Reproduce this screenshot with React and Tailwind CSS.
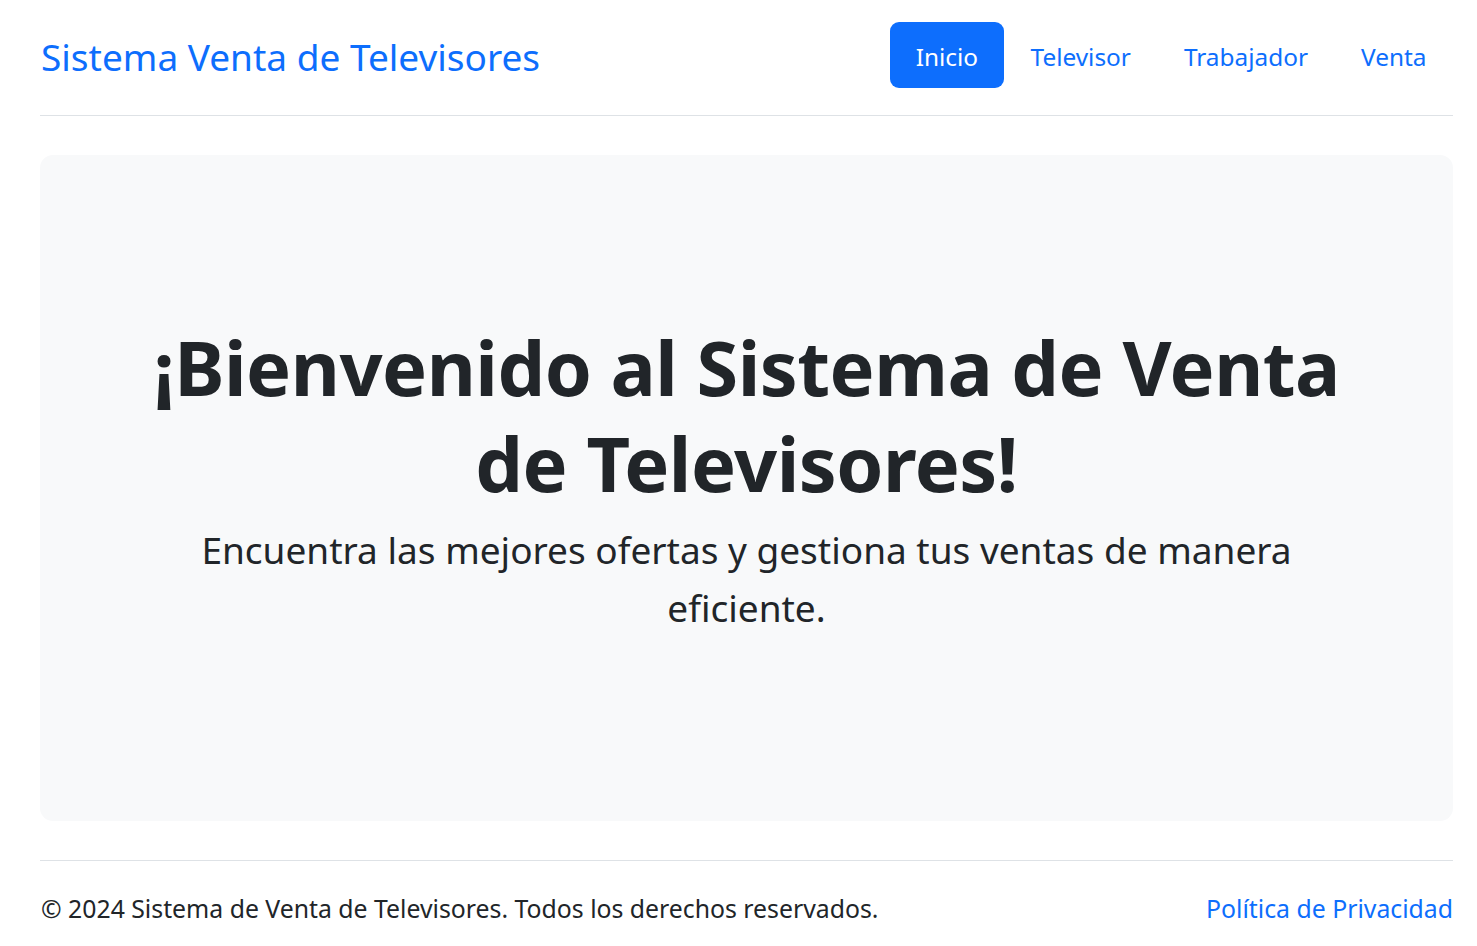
import React from 'react';

const links = ['Televisor', 'Trabajador', 'Venta'];

export default function App() {
  return (
    <div className="min-h-screen bg-white pl-[40px] pr-[24px] text-[#212529] font-['Noto_Sans',sans-serif]">
      {/* header */}
      <header className="flex items-center justify-between pt-[22px] pb-[27px] border-b border-[#dee2e6]">
        <a href="#" className="text-[37px] leading-[48px] text-[#0d6efd] pl-[1px] pt-[4px]">
          Sistema Venta de Televisores
        </a>
        <nav className="flex items-center">
          <a href="#" className="h-[66px] flex items-center pt-[4px] px-[26px] rounded-[9px] bg-[#0d6efd] text-white text-[24.4px]">
            Inicio
          </a>
          {links.map((l) => (
            <a key={l} href="#" className="h-[66px] flex items-center pt-[4px] px-[26.5px] text-[#0d6efd] text-[24.4px]">
              {l}
            </a>
          ))}
        </nav>
      </header>

      {/* hero */}
      <main className="mt-[39px] h-[666px] rounded-[13px] bg-[#f8f9fa] px-[80px] pt-[80px] pb-[100px] flex flex-col items-center justify-center text-center">
        <h1 className="text-[75.6px] leading-[96px] font-bold tracking-[-0.5px] max-w-[1253px] mb-[10px]">
          ¡Bienvenido al Sistema de Venta de Televisores!
        </h1>
        <p className="text-[37px] leading-[58px] max-w-[1140px]">
          Encuentra las mejores ofertas y gestiona tus ventas de manera eficiente.
        </p>
      </main>

      {/* footer */}
      <footer className="mt-[39px] border-t border-[#dee2e6] pt-[27px] pb-[20px] flex items-center justify-between text-[24.8px] leading-[40px]">
        <span className="pl-[1px]">© 2024 Sistema de Venta de Televisores. Todos los derechos reservados.</span>
        <a href="#" className="text-[#0d6efd]">Política de Privacidad</a>
      </footer>
    </div>
  );
}
